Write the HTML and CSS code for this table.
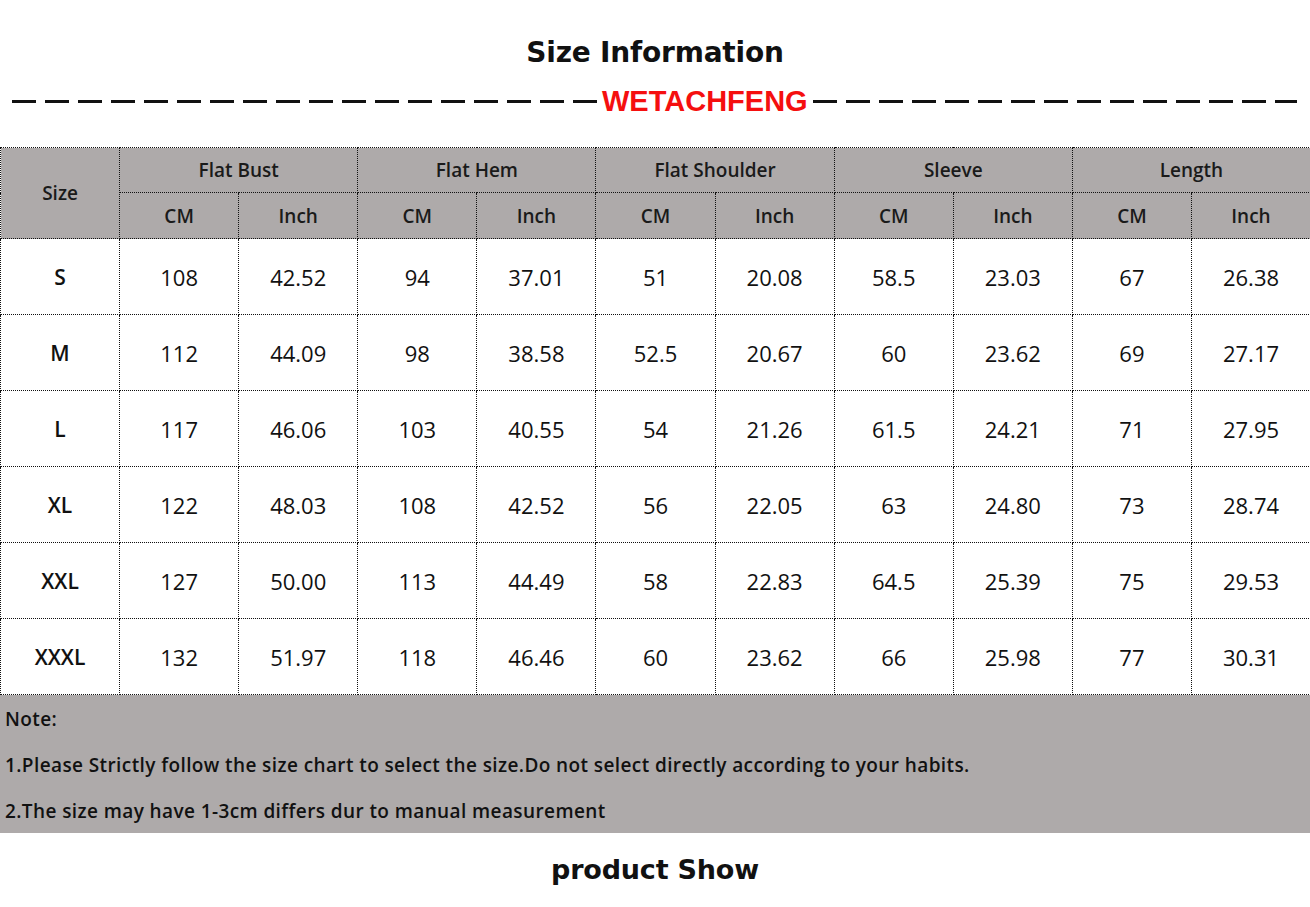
FILE: index.html
```html
<!DOCTYPE html>
<html lang="en">
<head>
    <meta charset="UTF-8">
    <title>Size Information</title>
    <link rel="stylesheet" href="styles.css">
</head>
<body>
    <div class="page">
        <h1 class="title">Size Information</h1>
        <div class="brand-line">
            <span class="dashes dashes-left"></span>
            <span class="brand">WETACHFENG</span>
            <span class="dashes"></span>
        </div>

        <table class="size-table">
            <colgroup>
                <col><col><col><col><col><col><col><col><col><col><col>
            </colgroup>
            <thead>
                <tr class="head-top">
                    <th rowspan="2">Size</th>
                    <th colspan="2">Flat Bust</th>
                    <th colspan="2">Flat Hem</th>
                    <th colspan="2">Flat Shoulder</th>
                    <th colspan="2">Sleeve</th>
                    <th colspan="2">Length</th>
                </tr>
                <tr class="head-sub">
                    <th>CM</th><th>Inch</th>
                    <th>CM</th><th>Inch</th>
                    <th>CM</th><th>Inch</th>
                    <th>CM</th><th>Inch</th>
                    <th>CM</th><th>Inch</th>
                </tr>
            </thead>
            <tbody>
                <tr><td class="size">S</td><td>108</td><td>42.52</td><td>94</td><td>37.01</td><td>51</td><td>20.08</td><td>58.5</td><td>23.03</td><td>67</td><td>26.38</td></tr>
                <tr><td class="size">M</td><td>112</td><td>44.09</td><td>98</td><td>38.58</td><td>52.5</td><td>20.67</td><td>60</td><td>23.62</td><td>69</td><td>27.17</td></tr>
                <tr><td class="size">L</td><td>117</td><td>46.06</td><td>103</td><td>40.55</td><td>54</td><td>21.26</td><td>61.5</td><td>24.21</td><td>71</td><td>27.95</td></tr>
                <tr><td class="size">XL</td><td>122</td><td>48.03</td><td>108</td><td>42.52</td><td>56</td><td>22.05</td><td>63</td><td>24.80</td><td>73</td><td>28.74</td></tr>
                <tr><td class="size">XXL</td><td>127</td><td>50.00</td><td>113</td><td>44.49</td><td>58</td><td>22.83</td><td>64.5</td><td>25.39</td><td>75</td><td>29.53</td></tr>
                <tr><td class="size">XXXL</td><td>132</td><td>51.97</td><td>118</td><td>46.46</td><td>60</td><td>23.62</td><td>66</td><td>25.98</td><td>77</td><td>30.31</td></tr>
            </tbody>
        </table>

        <div class="note">
            <p>Note:</p>
            <p>1.Please Strictly follow the size chart to select the size.Do not select directly according to your habits.</p>
            <p>2.The size may have 1-3cm differs dur to manual measurement</p>
        </div>

        <h2 class="title title-bottom">product Show</h2>
    </div>
</body>
</html>
```

FILE: styles.css
```css
* {
    margin: 0;
    padding: 0;
    box-sizing: border-box;
}

body {
    background: #fff;
    font-family: "Open Sans", Lato, sans-serif;
    color: #111;
}

.page {
    width: 1310px;
}

.title {
    font-family: "DejaVu Sans", sans-serif;
    font-weight: bold;
    font-size: 28px;
    text-align: center;
    color: #111;
    padding-top: 36px;
    height: 84px;
    letter-spacing: -0.2px;
}

.brand-line {
    display: flex;
    align-items: center;
    padding: 0 13px 0 12px;
    height: 34px;
}

.dashes {
    flex: 1;
    height: 3px;
    background: repeating-linear-gradient(90deg, #111 0 24px, transparent 24px 33px);
}

.dashes-left {
    flex: 0 0 585px;
    background: repeating-linear-gradient(270deg, #111 0 24px, transparent 24px 33px);
}

.brand {
    margin: 0 5px;
    font-family: "Liberation Sans", Arial, sans-serif;
    font-weight: bold;
    font-size: 29px;
    line-height: 34px;
    color: #f50f0f;
    white-space: nowrap;
}

.size-table {
    margin-top: 29px;
    width: 1310px;
    border-collapse: collapse;
    table-layout: fixed;
}

.size-table col {
    width: 119.1px;
}

.size-table th,
.size-table td {
    border: 1px dotted #111;
    text-align: center;
    vertical-align: middle;
}

.size-table th {
    background: #aeaaaa;
    font-weight: 600;
    font-size: 19px;
    color: #1a1a1a;
}

.head-top th {
    height: 45px;
}

.head-sub th {
    height: 46px;
}

.size-table td {
    height: 76px;
    font-size: 22px;
    color: #111;
}

.size-table td.size {
    font-weight: 600;
    font-size: 21px;
}

.note {
    background: #aeaaaa;
    height: 138px;
    padding: 11px 5px 0;
    font-size: 19px;
    letter-spacing: 0.4px;
    font-weight: 600;
    color: #111;
}

.note p {
    height: 46px;
}

.title-bottom {
    font-size: 27px;
    padding-top: 21px;
    height: auto;
}
```
